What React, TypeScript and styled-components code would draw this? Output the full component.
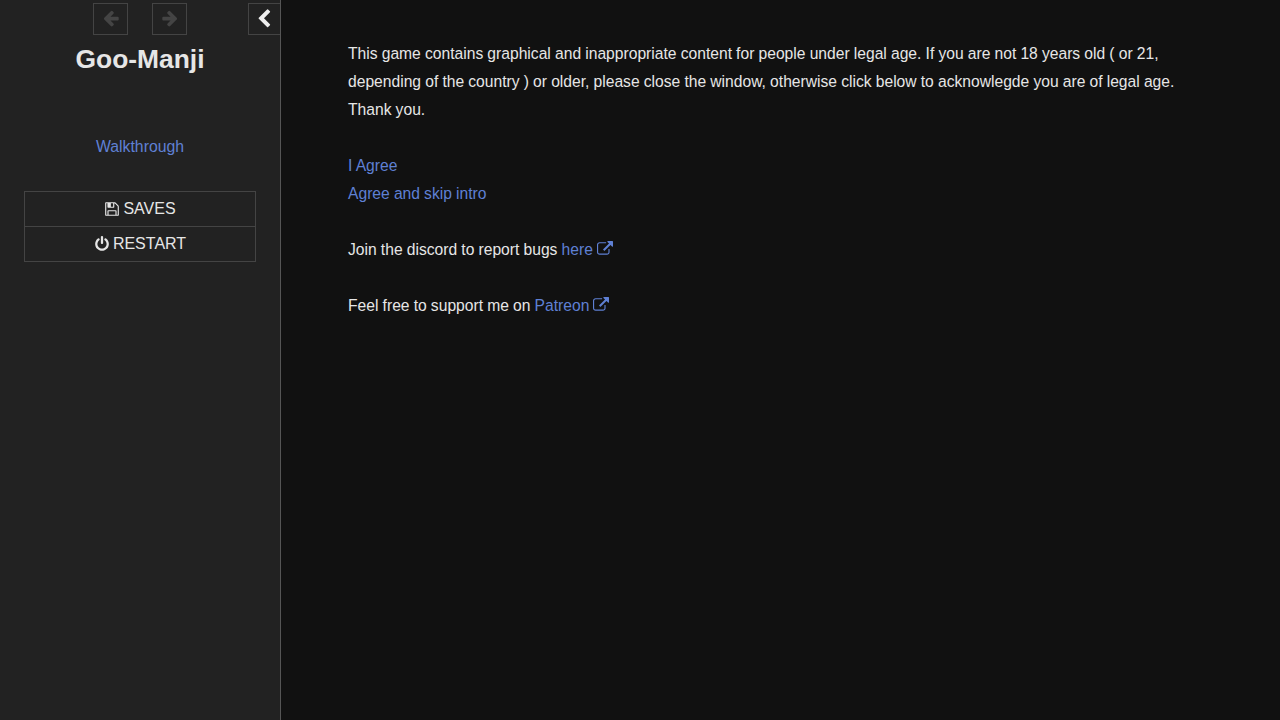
import React from 'react';
import styled, { createGlobalStyle } from 'styled-components';

const GlobalStyle = createGlobalStyle`
  html, body {
    margin: 0;
    padding: 0;
    height: 100%;
    background: #111;
    overflow: hidden;
  }
  body {
    font-family: "Liberation Sans", Arial, sans-serif;
    font-size: 15.65px;
    word-spacing: -0.2px;
    line-height: 28px;
    color: #e6e6e6;
  }
`;

const Layout = styled.div`
  display: flex;
  width: 1280px;
  height: 720px;
`;

const Sidebar = styled.aside`
  box-sizing: border-box;
  flex: 0 0 281px;
  height: 720px;
  background: #222;
  border-right: 1px solid #555;
  display: flex;
  flex-direction: column;
  align-items: center;
`;

const NavBar = styled.nav`
  box-sizing: border-box;
  align-self: stretch;
  height: 35px;
  display: flex;
  align-items: flex-start;
  padding: 3px 0 0 93px;
`;

const NavButton = styled.button<{ $gap?: number; $active?: boolean }>`
  box-sizing: border-box;
  flex: 0 0 ${({ $active }) => ($active ? 32 : 35)}px;
  height: 32px;
  margin-left: ${({ $gap }) => $gap ?? 0}px;
  padding: ${({ $active }) => ($active ? '0 2px 0 0' : '0 0 2px')};
  display: flex;
  align-items: center;
  justify-content: center;
  background: transparent;
  border: 1px solid #444;
  border-right-width: ${({ $active }) => ($active ? 0 : 1)}px;
  color: ${({ $active }) => ($active ? '#eee' : '#444')};
`;

const Title = styled.h1`
  margin: 7px 0 0;
  font-size: 26.4px;
  line-height: 34px;
  font-weight: 700;
  color: #e6e6e6;
`;

const Walkthrough = styled.a`
  margin-top: 57px;
  font-size: 15.8px;
  color: #5f80d4;
  text-decoration: none;
`;

const Menu = styled.ul`
  list-style: none;
  box-sizing: border-box;
  width: 232px;
  margin: 30px 0 0;
  padding: 0;
  border: 1px solid #444;
  font-size: 16px;
`;

const MenuItem = styled.li`
  height: 34px;
  display: flex;
  align-items: center;
  justify-content: center;
  gap: 3px;

  & + & {
    border-top: 1px solid #444;
  }
`;

const Main = styled.main`
  flex: 1;
  padding: 40px 96px 0 67px;
`;

const Paragraph = styled.p`
  margin: 0 0 28px;
`;

const Link = styled.a`
  color: #5f80d4;
  text-decoration: none;
`;

const BlockLink = styled(Link)`
  display: block;
`;

const Glyph = styled.svg`
  width: 16px;
  height: 16px;
  fill: currentColor;
`;

const ArrowGlyph = styled(Glyph)`
  width: 18px;
  height: 18px;
`;

const ChevronGlyph = styled(Glyph)`
  width: 20px;
  height: 20px;
`;

const ExternalGlyph = styled(Glyph)`
  margin-left: 4px;
  vertical-align: -2px;
`;

const ArrowLeft = () => (
  <ArrowGlyph viewBox="0 0 1792 1792">
    <path d="M1664 896v128q0 53-32.500 90.500t-84.500 37.500h-704l293 294q38 36 38 90t-38 90l-75 76q-38 38-90 38-53 0-91-38l-651-652q-37-37-37-90 0-52 37-91l651-650q38-38 91-38 52 0 90 38l75 74q38 38 38 91t-38 91l-293 293h704q52 0 84.500 37.500t32.500 90.500z" />
  </ArrowGlyph>
);

const ArrowRight = () => (
  <ArrowGlyph viewBox="0 0 1792 1792">
    <path d="M1600 960q0 54-37 91l-651 651q-39 37-91 37-51 0-90-37l-75-75q-38-38-38-91t38-91l293-293h-704q-52 0-84.500-37.500t-32.500-90.500v-128q0-53 32.500-90.500t84.500-37.500h704l-293-294q-38-36-38-90t38-90l75-75q38-38 90-38 53 0 91 38l651 651q37 35 37 90z" />
  </ArrowGlyph>
);

const ChevronLeft = () => (
  <ChevronGlyph viewBox="0 0 1792 1792">
    <path d="M1427 301l-531 531 531 531q19 19 19 45t-19 45l-166 166q-19 19-45 19t-45-19l-742-742q-19-19-19-45t19-45l742-742q19-19 45-19t45 19l166 166q19 19 19 45t-19 45z" />
  </ChevronGlyph>
);

const SaveIcon = () => (
  <Glyph viewBox="0 0 1792 1792">
    <path d="M512 1536h768v-384h-768v384zm896 0h128v-896q0-14-10-38.500t-20-34.500l-281-281q-10-10-34-20t-39-10v416q0 40-28 68t-68 28h-576q-40 0-68-28t-28-68v-416h-128v1280h128v-416q0-40 28-68t68-28h832q40 0 68 28t28 68v416zm-384-928v-320q0-13-9.500-22.500t-22.500-9.500h-192q-13 0-22.500 9.500t-9.500 22.500v320q0 13 9.500 22.500t22.500 9.500h192q13 0 22.500-9.500t9.500-22.500zm640 32v928q0 40-28 68t-68 28h-1344q-40 0-68-28t-28-68v-1344q0-40 28-68t68-28h928q40 0 88 20t76 48l280 280q28 28 48 76t20 88z" />
  </Glyph>
);

const PowerIcon = () => (
  <Glyph viewBox="0 0 1792 1792">
    <path d="M1664 896q0 156-61 298t-164 245-245 164-298 61-298-61-245-164-164-245-61-298q0-182 80.500-343t226.500-270q43-32 95.500-25t83.500 50q32 42 24.500 94.500t-49.500 84.500q-98 74-151.500 181t-53.500 228q0 104 40.500 198.500t109.500 163.500 163.500 109.500 198.500 40.500 198.500-40.500 163.500-109.500 109.500-163.500 40.500-198.500q0-121-53.500-228t-151.500-181q-42-32-49.500-84.500t24.500-94.500q31-43 84-50t95 25q146 109 226.500 270t80.500 343zm-640-768v640q0 52-38 90t-90 38-90-38-38-90v-640q0-52 38-90t90-38 90 38 38 90z" />
  </Glyph>
);

const ExternalLink = () => (
  <ExternalGlyph viewBox="0 0 1792 1792">
    <path d="M1408 928v320q0 119-84.500 203.500t-203.500 84.500h-832q-119 0-203.500-84.500t-84.500-203.500v-832q0-119 84.500-203.500t203.500-84.500h704q14 0 23 9t9 23v64q0 14-9 23t-23 9h-704q-66 0-113 47t-47 113v832q0 66 47 113t113 47h832q66 0 113-47t47-113v-320q0-14 9-23t23-9h64q14 0 23 9t9 23zm384-864v512q0 26-19 45t-45 19-45-19l-176-176-652 652q-10 10-23 10t-23-10l-114-114q-10-10-10-23t10-23l652-652-176-176q-19-19-19-45t19-45 45-19h512q26 0 45 19t19 45z" />
  </ExternalGlyph>
);

const App = () => {
  return (
    <>
      <GlobalStyle />
      <Layout>
        <Sidebar>
          <NavBar>
            <NavButton>
              <ArrowLeft />
            </NavButton>
            <NavButton $gap={24}>
              <ArrowRight />
            </NavButton>
            <NavButton $gap={61} $active>
              <ChevronLeft />
            </NavButton>
          </NavBar>
          <Title>Goo-Manji</Title>
          <Walkthrough href="#">Walkthrough</Walkthrough>
          <Menu>
            <MenuItem>
              <SaveIcon /> SAVES
            </MenuItem>
            <MenuItem>
              <PowerIcon /> RESTART
            </MenuItem>
          </Menu>
        </Sidebar>
        <Main>
          <Paragraph>
            This game contains graphical and inappropriate content for people under legal age. If
            you are not 18 years old ( or 21, depending of the country ) or older, please close the
            window, otherwise click below to acknowlegde you are of legal age.
            <br />
            Thank you.
          </Paragraph>
          <Paragraph>
            <BlockLink href="#">I Agree</BlockLink>
            <BlockLink href="#">Agree and skip intro</BlockLink>
          </Paragraph>
          <Paragraph>
            Join the discord to report bugs{' '}
            <Link href="#">
              here
              <ExternalLink />
            </Link>
          </Paragraph>
          <Paragraph>
            Feel free to support me on{' '}
            <Link href="#">
              Patreon
              <ExternalLink />
            </Link>
          </Paragraph>
        </Main>
      </Layout>
    </>
  );
};

export default App;
